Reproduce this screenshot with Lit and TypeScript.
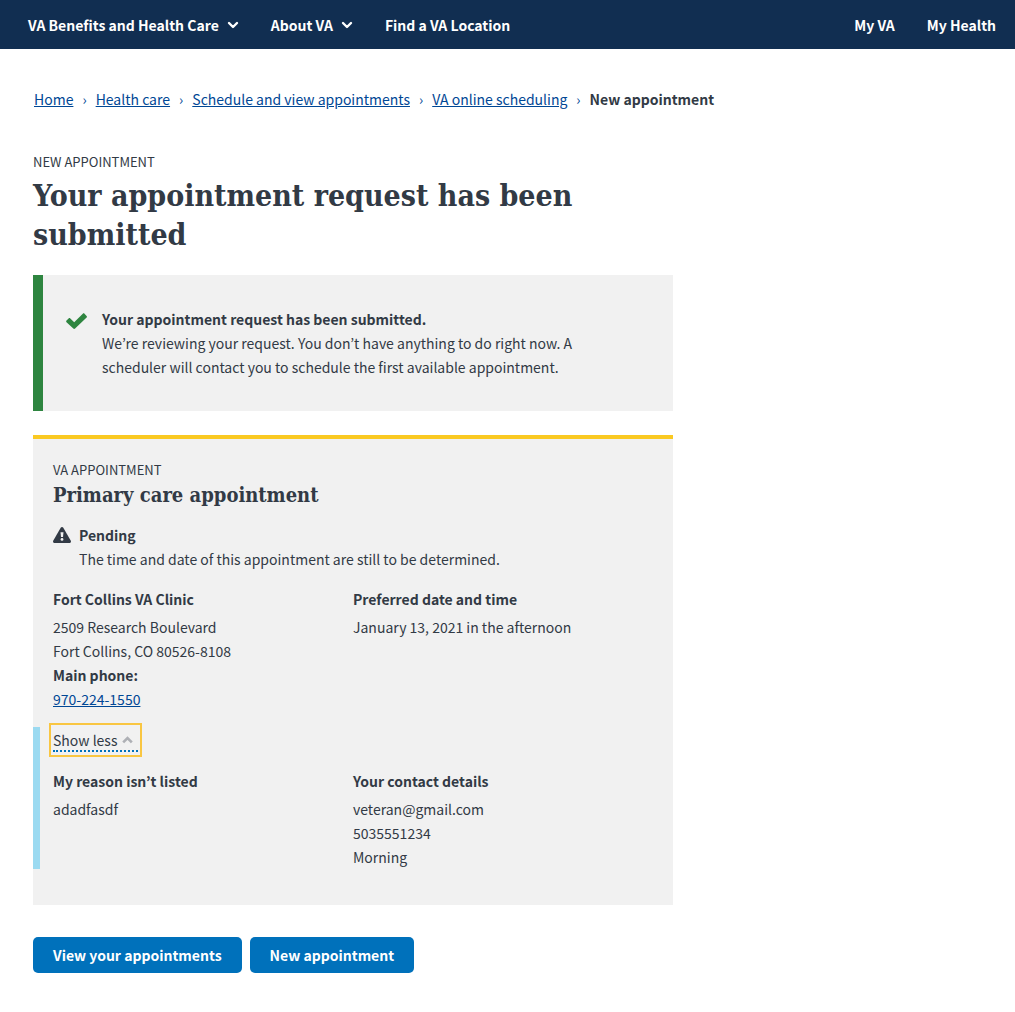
import { LitElement, html, css, nothing } from "lit";
import { customElement, property, state } from "lit/decorators.js";

const chevronDown = html`<svg class="caret" viewBox="0 0 12 8" aria-hidden="true">
  <path d="M2 2 L6 6 L10 2" fill="none" stroke="currentColor" stroke-width="2.4" stroke-linecap="round" stroke-linejoin="round"></path>
</svg>`;

@customElement("site-header")
export class SiteHeader extends LitElement {
  static styles = css`
    :host {
      display: block;
      background: #112e51;
    }
    .bar {
      display: flex;
      justify-content: space-between;
      min-height: 49px;
      padding: 0 19px 0 28px;
      box-sizing: border-box;
    }
    .group {
      display: flex;
      gap: 32px;
      margin: 0;
      padding: 0;
      list-style: none;
    }
    .item {
      display: flex;
      align-items: center;
    }
    .link {
      display: flex;
      align-items: center;
      gap: 8px;
      padding: 0;
      border: 0;
      background: none;
      color: #fff;
      font: inherit;
      font-weight: 700;
      line-height: 24px;
      text-decoration: none;
      white-space: nowrap;
      cursor: pointer;
    }
    .caret {
      width: 12px;
      height: 8px;
    }
  `;

  render() {
    return html`<nav class="bar" aria-label="Main">
      <ul class="group">
        <li class="item"><button class="link" type="button" aria-haspopup="true">VA Benefits and Health Care ${chevronDown}</button></li>
        <li class="item"><button class="link" type="button" aria-haspopup="true">About VA ${chevronDown}</button></li>
        <li class="item"><a class="link" href="#locations">Find a VA Location</a></li>
      </ul>
      <ul class="group">
        <li class="item"><a class="link" href="#my-va">My VA</a></li>
        <li class="item"><a class="link" href="#my-health">My Health</a></li>
      </ul>
    </nav>`;
  }
}

@customElement("bread-crumbs")
export class BreadCrumbs extends LitElement {
  static styles = css`
    :host {
      display: block;
    }
    .list {
      display: flex;
      flex-wrap: wrap;
      margin: 0;
      padding: 0;
      list-style: none;
    }
    .link {
      color: #004795;
      text-decoration: underline;
    }
    .sep {
      padding: 0 9px;
      color: #004795;
    }
    .current {
      font-weight: 700;
    }
  `;

  @property({ attribute: false }) trail: string[] = [];
  @property() current = "";

  render() {
    return html`<nav aria-label="Breadcrumb">
      <ol class="list">
        ${this.trail.map(
          (name) => html`<li><a class="link" href="#">${name}</a><span class="sep" aria-hidden="true">›</span></li>`
        )}
        <li class="current" aria-current="page">${this.current}</li>
      </ol>
    </nav>`;
  }
}

@customElement("success-alert")
export class SuccessAlert extends LitElement {
  static styles = css`
    :host {
      display: block;
    }
    .alert {
      display: flex;
      gap: 15px;
      padding: 32px 64px 32px 23px;
      border-left: 10px solid #2e8540;
      background: #f1f1f1;
    }
    .icon {
      flex: none;
      width: 21px;
      height: 16px;
      margin-top: 6px;
      fill: #2e8540;
    }
    .text {
      margin: 0;
    }
  `;

  render() {
    return html`<div class="alert" role="status">
      <svg class="icon" viewBox="0 0 21 16" aria-hidden="true">
        <path d="M20.6 2.9 18.5 .7C18 .2 17.3 .2 16.8 .7L8.2 9.2 4.3 5.4C3.8 4.9 3.1 4.9 2.6 5.4L.5 7.5C0 8 0 8.7 .5 9.2L7.3 15.5C7.8 16 8.6 16 9.1 15.5L20.6 4.6C21.1 4.1 21.1 3.4 20.6 2.9Z"></path>
      </svg>
      <p class="text"><strong>Your appointment request has been submitted.</strong><br />We’re reviewing your request. You don’t have anything to do right now. A scheduler will contact you to schedule the first available appointment.</p>
    </div>`;
  }
}

@customElement("appointment-card")
export class AppointmentCard extends LitElement {
  static styles = css`
    :host {
      display: block;
    }
    .card {
      padding: 20px 0 36px;
      border-top: 4px solid #fac922;
      background: #f1f1f1;
    }
    .inner {
      padding: 0 20px;
    }
    .kicker {
      margin: 0;
      font-size: 13px;
      line-height: 22px;
    }
    .title {
      margin: 0 0 14px;
      font-family: "DejaVu Serif Condensed", "DejaVu Serif", serif;
      font-size: 20px;
      font-weight: 700;
      line-height: 28px;
    }
    .status {
      display: flex;
      gap: 8px;
      margin-bottom: 16px;
    }
    .warn {
      flex: none;
      width: 18px;
      height: 16px;
      margin-top: 4px;
    }
    .text {
      margin: 0;
    }
    .columns {
      display: grid;
      grid-template-columns: 1fr 1fr;
    }
    .heading {
      margin: 0 0 4px;
      font-size: inherit;
      font-weight: 700;
      line-height: 24px;
    }
    .phone {
      color: #004795;
    }
    .more {
      margin-top: 16px;
      padding: 0 20px 0 13px;
      border-left: 7px solid #9bdaf1;
    }
    .more-collapsed {
      border-left-color: transparent;
    }
    .toggle {
      display: block;
      padding: 3px 0 1px;
      margin-bottom: 16px;
      border: 0;
      outline: 2px solid #f9c642;
      outline-offset: 2px;
      background: none;
      color: inherit;
      font: inherit;
      cursor: pointer;
    }
    .toggle-label {
      display: flex;
      align-items: center;
      gap: 5px;
      padding-right: 5px;
      border-bottom: 2px dotted #0071bb;
      line-height: 20px;
    }
    .chevron {
      width: 11px;
      height: 8px;
    }
    .chevron-down {
      transform: rotate(180deg);
    }
  `;

  @state() private expanded = true;

  private toggle() {
    this.expanded = !this.expanded;
  }

  render() {
    return html`<article class="card">
      <div class="inner">
        <p class="kicker">VA APPOINTMENT</p>
        <h2 class="title">Primary care appointment</h2>
        <div class="status">
          <svg class="warn" viewBox="0 0 18 16" aria-hidden="true">
            <path d="M7.7 .8C8.3 -.2 9.7 -.2 10.3 .8L17.8 13.7C18.3 14.7 17.6 16 16.5 16H1.5C.4 16 -.3 14.7 .2 13.7Z" fill="#323a45"></path>
            <path d="M7.5 5.2H10.5L10 10H8Z" fill="#f1f1f1"></path>
            <circle cx="9" cy="12.4" r="1.4" fill="#f1f1f1"></circle>
          </svg>
          <p class="text"><strong>Pending</strong><br />The time and date of this appointment are still to be determined.</p>
        </div>
        <div class="columns">
          <section>
            <h3 class="heading">Fort Collins VA Clinic</h3>
            <p class="text">2509 Research Boulevard<br />Fort Collins, CO 80526-8108<br /><strong>Main phone:</strong><br /><a class="phone" href="tel:9702241550">970-224-1550</a></p>
          </section>
          <section>
            <h3 class="heading">Preferred date and time</h3>
            <p class="text">January 13, 2021 in the afternoon</p>
          </section>
        </div>
      </div>
      <div class="more ${this.expanded ? "" : "more-collapsed"}">
        <button class="toggle" type="button" aria-expanded=${this.expanded} @click=${this.toggle}>
          <span class="toggle-label">${this.expanded ? "Show less" : "Show more"}
            <svg class="chevron ${this.expanded ? "" : "chevron-down"}" viewBox="0 0 11 8" aria-hidden="true">
              <path d="M1.2 6.4 L5.5 2 L9.8 6.4" fill="none" stroke="#aeb0b5" stroke-width="2.6" stroke-linejoin="miter"></path>
            </svg>
          </span>
        </button>
        ${this.expanded
          ? html`<div class="columns">
              <section>
                <h3 class="heading">My reason isn’t listed</h3>
                <p class="text">adadfasdf</p>
              </section>
              <section>
                <h3 class="heading">Your contact details</h3>
                <p class="text">veteran@gmail.com<br />5035551234<br />Morning</p>
              </section>
            </div>`
          : nothing}
      </div>
    </article>`;
  }
}

@customElement("app-root")
export class AppRoot extends LitElement {
  static styles = css`
    :host {
      display: block;
      background: #fff;
      color: #323a45;
      font-family: "Noto Sans CJK KR", "Noto Sans", sans-serif;
      font-size: 14px;
      line-height: 24px;
    }
    .crumbs {
      padding: 38px 34px 0;
    }
    .main {
      max-width: 640px;
      padding: 39px 33px;
    }
    .kicker {
      margin: 0;
      font-size: 13px;
      line-height: 24px;
    }
    .title {
      margin: 2px 0 21px;
      font-family: "DejaVu Serif Condensed", "DejaVu Serif", serif;
      font-size: 30px;
      font-weight: 700;
      line-height: 39px;
    }
    .card {
      margin-top: 24px;
    }
    .actions {
      display: flex;
      flex-wrap: wrap;
      gap: 8px;
      margin-top: 32px;
    }
    .button {
      padding: 6px 20px;
      border: 0;
      border-radius: 5px;
      background: #0071bb;
      color: #fff;
      font: inherit;
      font-weight: 700;
      line-height: 24px;
      cursor: pointer;
    }
  `;

  private trail = ["Home", "Health care", "Schedule and view appointments", "VA online scheduling"];

  render() {
    return html`
      <site-header></site-header>
      <bread-crumbs class="crumbs" .trail=${this.trail} current="New appointment"></bread-crumbs>
      <main class="main">
        <p class="kicker">NEW APPOINTMENT</p>
        <h1 class="title">Your appointment request has been submitted</h1>
        <success-alert></success-alert>
        <appointment-card class="card"></appointment-card>
        <div class="actions">
          <button class="button" type="button">View your appointments</button>
          <button class="button" type="button">New appointment</button>
        </div>
      </main>
    `;
  }
}
